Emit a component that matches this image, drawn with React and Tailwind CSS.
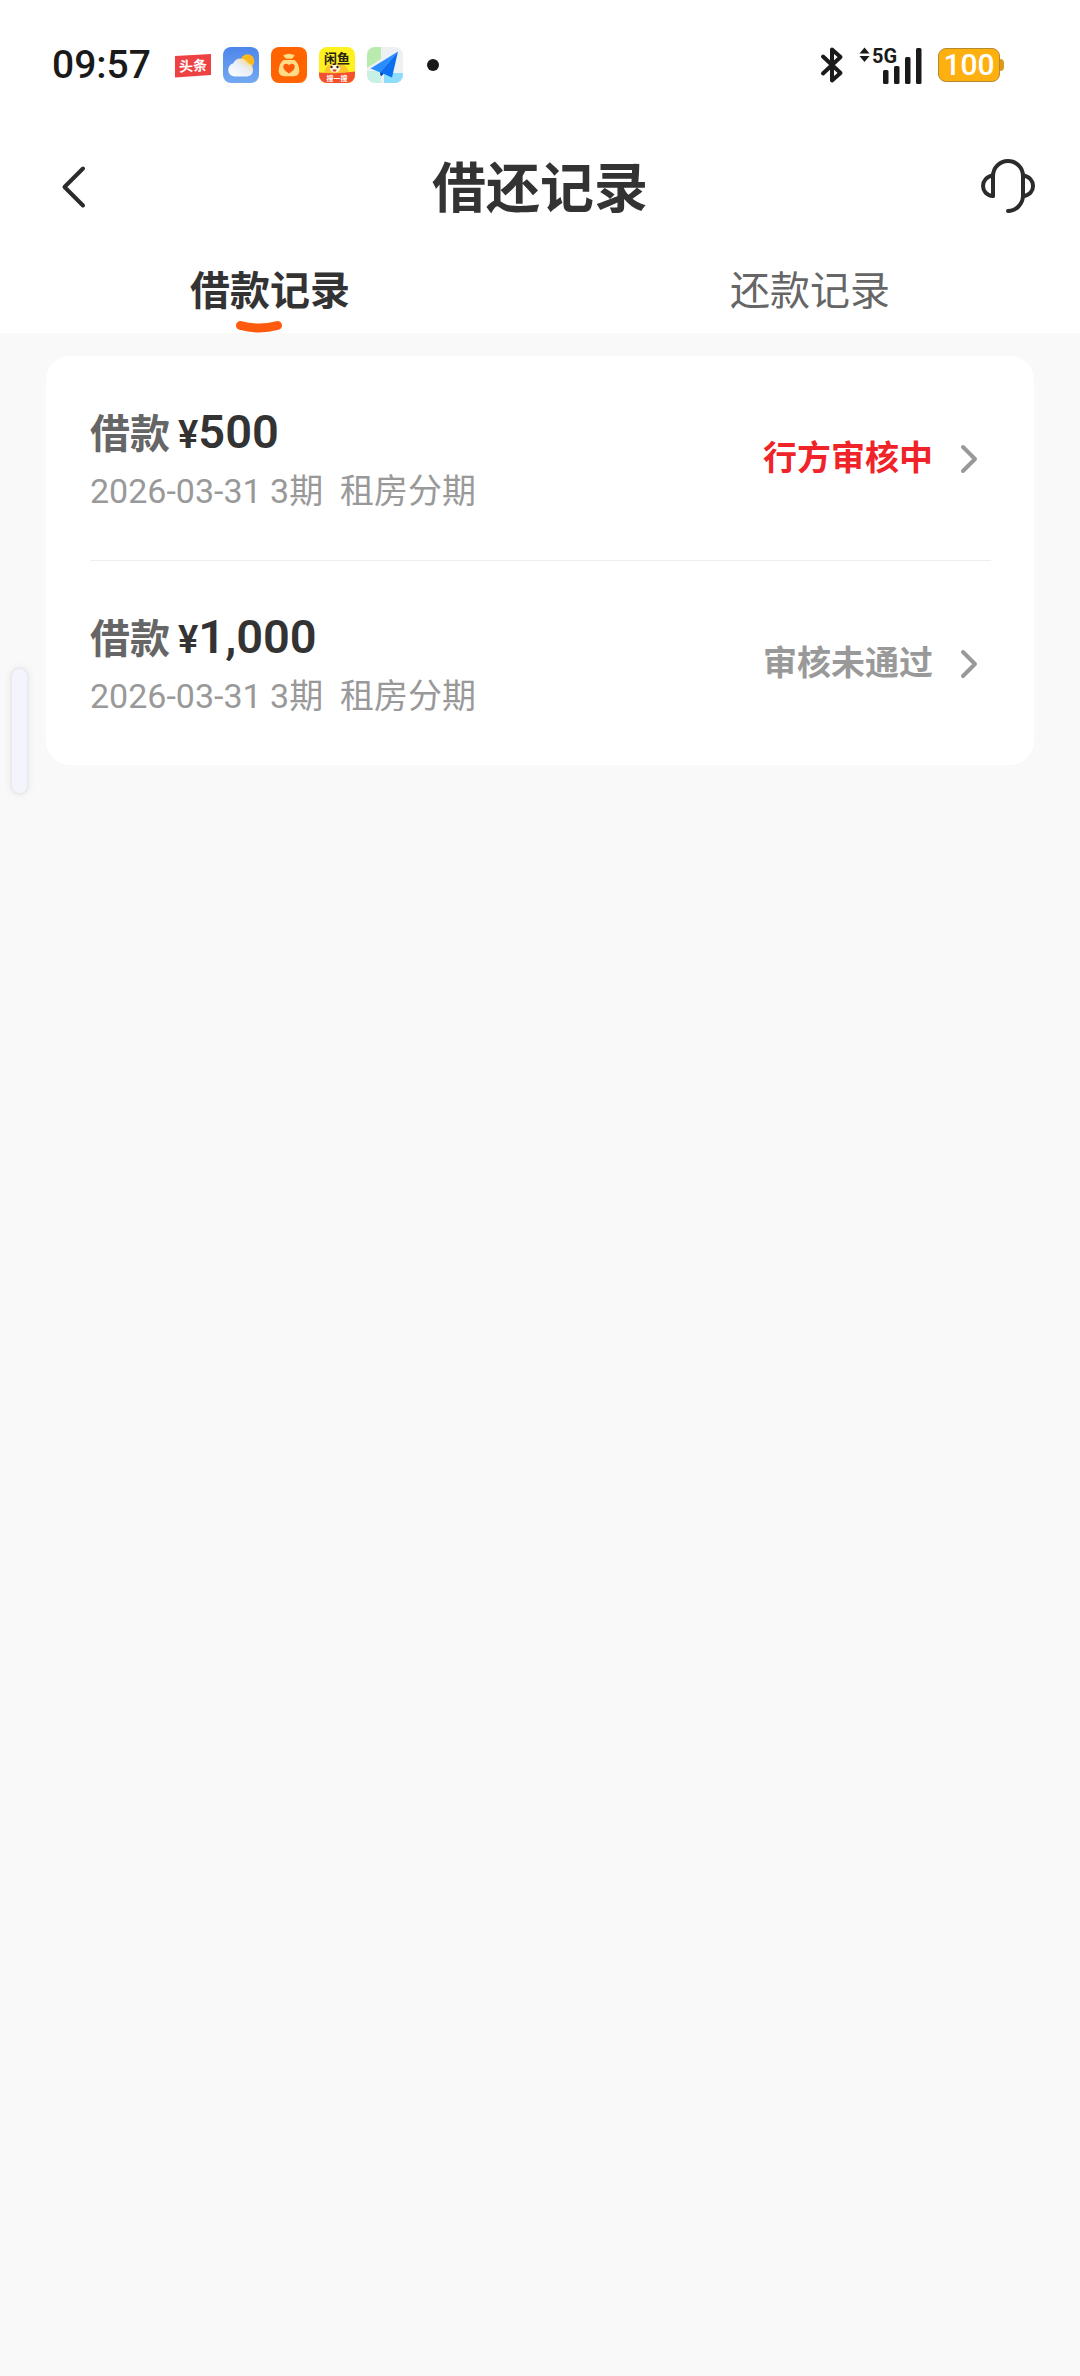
import { useState } from "react";

const FONT = "font-[Roboto,'Noto_Sans_CJK_SC',sans-serif]";

const TABS = [
  { key: "loan", label: "借款记录" },
  { key: "repay", label: "还款记录" },
];

const RECORDS = [
  {
    id: 1,
    amount: "500",
    date: "2026-03-31",
    term: "3期",
    product: "租房分期",
    status: "行方审核中",
    pending: true,
  },
  {
    id: 2,
    amount: "1,000",
    date: "2026-03-31",
    term: "3期",
    product: "租房分期",
    status: "审核未通过",
    pending: false,
  },
];

function ToutiaoIcon() {
  return (
    <svg className="w-9 h-9" viewBox="0 0 36 36">
      <path d="M0 9 36 7v21L0 30.5z" fill="#ee4144" />
      <text
        x="18"
        y="24"
        textAnchor="middle"
        fontSize="14"
        fontWeight="700"
        fill="#fff"
        transform="rotate(-3 18 18)"
      >
        头条
      </text>
    </svg>
  );
}

function WeatherIcon() {
  return (
    <svg className="w-9 h-9" viewBox="0 0 36 36">
      <defs>
        <linearGradient id="sky" x1="0" y1="0" x2="0" y2="1">
          <stop offset="0" stopColor="#4d86ea" />
          <stop offset="1" stopColor="#74a9f2" />
        </linearGradient>
        <linearGradient id="cloud" x1="0" y1="1" x2="1" y2="0">
          <stop offset="0" stopColor="#fff" />
          <stop offset="0.55" stopColor="#e9eef8" />
          <stop offset="1" stopColor="#fbcf55" />
        </linearGradient>
      </defs>
      <rect width="36" height="36" rx="8" fill="url(#sky)" />
      <circle cx="24.5" cy="14" r="6.8" fill="#fdb81e" />
      <path
        d="M11.5 29.5a6.7 6.7 0 0 1-1.2-13.2 8 8 0 0 1 14.6-.3 6.9 6.9 0 0 1-.6 13.5z"
        fill="url(#cloud)"
      />
    </svg>
  );
}

function MoneyBagIcon() {
  return (
    <svg className="w-9 h-9" viewBox="0 0 36 36">
      <rect width="36" height="36" rx="8" fill="#ff6400" />
      <path
        d="M12.5 7.5c2 1 3.4-.9 5.5-.6 2.1-.3 3.5 1.6 5.500.6-.2 2.5-1.7 3.7-3.2 4.300h-4.600c-1.5-.6-3-1.8-3.2-4.300z"
        fill="#ffdc85"
      />
      <path
        d="M12.5 13h11c3 2.2 4.800 6.500 4.800 10.500 0 4-2.300 5.700-5.500 5.700h-9.600c-3.200 0-5.500-1.700-5.500-5.700 0-4 1.800-8.300 4.800-10.500z"
        fill="#ffdc85"
      />
      <path
        d="M18 26.5c-3.500-2.200-5.800-4.200-5.800-6.700 0-3.200 4-4 5.800-1.400 1.800-2.600 5.800-1.800 5.800 1.400 0 2.500-2.300 4.500-5.800 6.700z"
        fill="#ff5a0a"
      />
    </svg>
  );
}

function XianyuIcon() {
  return (
    <svg className="w-9 h-9" viewBox="0 0 36 36">
      <defs>
        <clipPath id="xy">
          <rect width="36" height="36" rx="8" />
        </clipPath>
      </defs>
      <g clipPath="url(#xy)">
        <rect width="36" height="36" fill="#fff01f" />
        <path d="M5 28c0-7 5-12 11-11 6-2 14 2 14 11z" fill="#fcc52c" />
        <ellipse cx="16" cy="21.5" rx="5" ry="4" fill="#fff6d8" />
        <circle cx="12.5" cy="20" r="1.2" fill="#222" />
        <circle cx="18.5" cy="20" r="1.2" fill="#222" />
        <path d="M13.5 22.500h4c0 3-4 3-4 0z" fill="#e2352b" />
        <path d="M0 25.500q18 2 36-1V36H0z" fill="#f4502d" />
        <text
          x="18"
          y="15.5"
          textAnchor="middle"
          fontSize="13"
          fontWeight="700"
          fill="#262310"
        >
          闲鱼
        </text>
        <text
          x="18"
          y="33.5"
          textAnchor="middle"
          fontSize="7"
          fontWeight="700"
          fill="#fff"
        >
          搜一搜
        </text>
      </g>
    </svg>
  );
}

function MapIcon() {
  return (
    <svg className="w-9 h-9" viewBox="0 0 36 36">
      <defs>
        <clipPath id="map">
          <rect width="36" height="36" rx="8" />
        </clipPath>
      </defs>
      <g clipPath="url(#map)">
        <rect width="36" height="36" fill="#eef1f3" />
        <path d="M0 0h14v12L0 21z" fill="#b9ebae" />
        <path d="M0 24h14v12H0z" fill="#c9f0e4" />
        <path d="M17 26h19v10H17z" fill="#8edcfb" />
      </g>
      <path d="M31 4.5 3.5 21.500l9.500 3.800z" fill="#2a8dff" />
      <path d="M31 4.500 13 25.300l1 4 2.600-2.500 8.400 3.700z" fill="#0b6ff0" />
      <path d="m13 25.300 1 4 2.600-2.500z" fill="#0746b8" />
    </svg>
  );
}

function BluetoothIcon() {
  return (
    <svg className="w-6 h-10" viewBox="0 0 24 40" fill="none">
      <path
        d="M3 11.5 20.5 28 12 35.500v-31L20.500 12 3 28.500"
        stroke="#1a1a1a"
        strokeWidth="4"
        strokeLinejoin="round"
        strokeLinecap="round"
      />
    </svg>
  );
}

function SignalIcon() {
  return (
    <svg className="w-16 h-10" viewBox="0 0 64 40" fill="#1a1a1a">
      <path d="m6.500 2.500 5 6h-10z" />
      <path d="m6.500 17 5-6h-10z" />
      <text x="14" y="17.5" fontSize="20" fontWeight="700">
        5G
      </text>
      <rect x="25" y="25" width="5.5" height="14" rx="1.5" />
      <rect x="36" y="21" width="5.5" height="18" rx="1.5" />
      <rect x="47" y="12" width="5.5" height="27" rx="1.5" />
      <rect x="58" y="3" width="5.5" height="36" rx="1.5" />
    </svg>
  );
}

function StatusBar() {
  return (
    <div className="h-[130px] pl-[52px] pr-[76px] flex items-center justify-between text-[#1a1a1a]">
      <div className="flex items-center">
        <span className="text-[39px] leading-[48px] font-medium mr-6">
          09:57
        </span>
        <div className="flex items-center gap-3">
          <ToutiaoIcon />
          <WeatherIcon />
          <MoneyBagIcon />
          <XianyuIcon />
          <MapIcon />
        </div>
        <span className="w-3 h-3 rounded-full bg-[#1a1a1a] ml-6" />
      </div>

      <div className="flex items-center gap-4">
        <div className="flex items-center gap-3.5">
          <BluetoothIcon />
          <SignalIcon />
        </div>
        <div className="flex items-center">
          <span className="w-[62px] h-[34px] rounded-lg bg-[#ffb011] border border-[#b58a2c] text-white text-[30px] leading-[32px] font-medium flex items-center justify-center">
            100
          </span>
          <span className="w-1 h-3 rounded-r bg-[#d99a1c]" />
        </div>
      </div>
    </div>
  );
}

function Header() {
  return (
    <header className="h-[120px] pl-12 pr-10 flex items-center justify-between">
      <button aria-label="返回" className="w-14 h-14">
        <svg className="w-14 h-14" viewBox="0 0 56 56" fill="none">
          <path
            d="M35 6.500 16.500 25 35 43.500"
            stroke="#2b2b2b"
            strokeWidth="4"
            strokeLinecap="round"
            strokeLinejoin="round"
          />
        </svg>
      </button>
      <h1 className="text-[54px] leading-[72px] font-bold text-[#333333]">
        借还记录
      </h1>
      <button aria-label="客服" className="w-16 h-16">
        <svg
          className="w-16 h-16"
          viewBox="0 0 64 64"
          fill="none"
          stroke="#2b2b2b"
          strokeWidth="4"
          strokeLinecap="round"
          strokeLinejoin="round"
        >
          <path d="M17 37.500V18a15 15 0 0 1 30 0V38A15.500 15.500 0 0 1 32 53" />
          <path d="M17 17.500C3.700 19 3.700 37 17 38" />
          <path d="M47 17.500C60.400 19 60.400 37 47 38" />
        </svg>
      </button>
    </header>
  );
}

function Tabs({ active, onChange }) {
  return (
    <div role="tablist" className="h-[83px] grid grid-cols-2">
      {TABS.map((tab) => {
        const isActive = tab.key === active;
        return (
          <button
            key={tab.key}
            role="tab"
            aria-selected={isActive}
            onClick={() => onChange(tab.key)}
            className={`relative text-[40px] leading-[56px] ${
              isActive ? "font-bold text-[#333333]" : "text-[#666666]"
            }`}
          >
            {tab.label}
            {isActive && (
              <svg
                className="absolute bottom-0 left-1/2 -ml-9 w-[50px] h-3"
                viewBox="0 0 50 12"
                fill="none"
              >
                <path
                  d="M6.500 4.500Q25 9.500 43.500 4.500"
                  stroke="#ff5b0f"
                  strokeWidth="9"
                  strokeLinecap="round"
                />
              </svg>
            )}
          </button>
        );
      })}
    </div>
  );
}

function RecordRow({ record }) {
  return (
    <li>
      <button className="w-full h-[204px] pr-2.5 flex items-center justify-between text-left">
        <div>
          <div className="flex items-baseline gap-2 leading-[54px]">
            <span className="text-[40px] font-bold text-[#666666]">借款</span>
            <span className="text-[#333333] font-semibold">
              <span className="text-[38px]">¥</span>
              <span className="text-[47px]">{record.amount}</span>
            </span>
          </div>
          <p className="text-[34px] leading-[42px] text-[#999999] whitespace-pre">
            {`${record.date} ${record.term}  ${record.product}`}
          </p>
        </div>
        <div className="flex items-center gap-6">
          <span
            className={`text-[34px] leading-[48px] font-bold ${
              record.pending ? "text-[#f02329]" : "text-[#999999]"
            }`}
          >
            {record.status}
          </span>
          <svg className="w-6 h-8" viewBox="0 0 24 32" fill="none">
            <path
              d="M6 5 18 17 6 29"
              stroke="#999999"
              strokeWidth="4"
              strokeLinecap="round"
              strokeLinejoin="round"
            />
          </svg>
        </div>
      </button>
    </li>
  );
}

export default function App() {
  const [activeTab, setActiveTab] = useState("loan");

  return (
    <div className={`relative min-h-screen bg-[#f9f9f9] ${FONT}`} lang="zh-CN">
      <div className="bg-white">
        <StatusBar />
        <Header />
        <Tabs active={activeTab} onChange={setActiveTab} />
      </div>

      <main className="px-[46px] pt-[23px]">
        {activeTab === "loan" && (
          <ul className="bg-white rounded-3xl pl-11 pr-[43px] divide-y divide-[#eeeeee]">
            {RECORDS.map((record) => (
              <RecordRow key={record.id} record={record} />
            ))}
          </ul>
        )}
      </main>

      {/* edge panel handle */}
      <div className="absolute left-[10px] top-[667px] w-[19px] h-32 rounded-full bg-[#f4f4fd] border-2 border-[#ebebef] shadow-[0_0_8px_rgba(0,0,0,0.06)]" />
    </div>
  );
}
